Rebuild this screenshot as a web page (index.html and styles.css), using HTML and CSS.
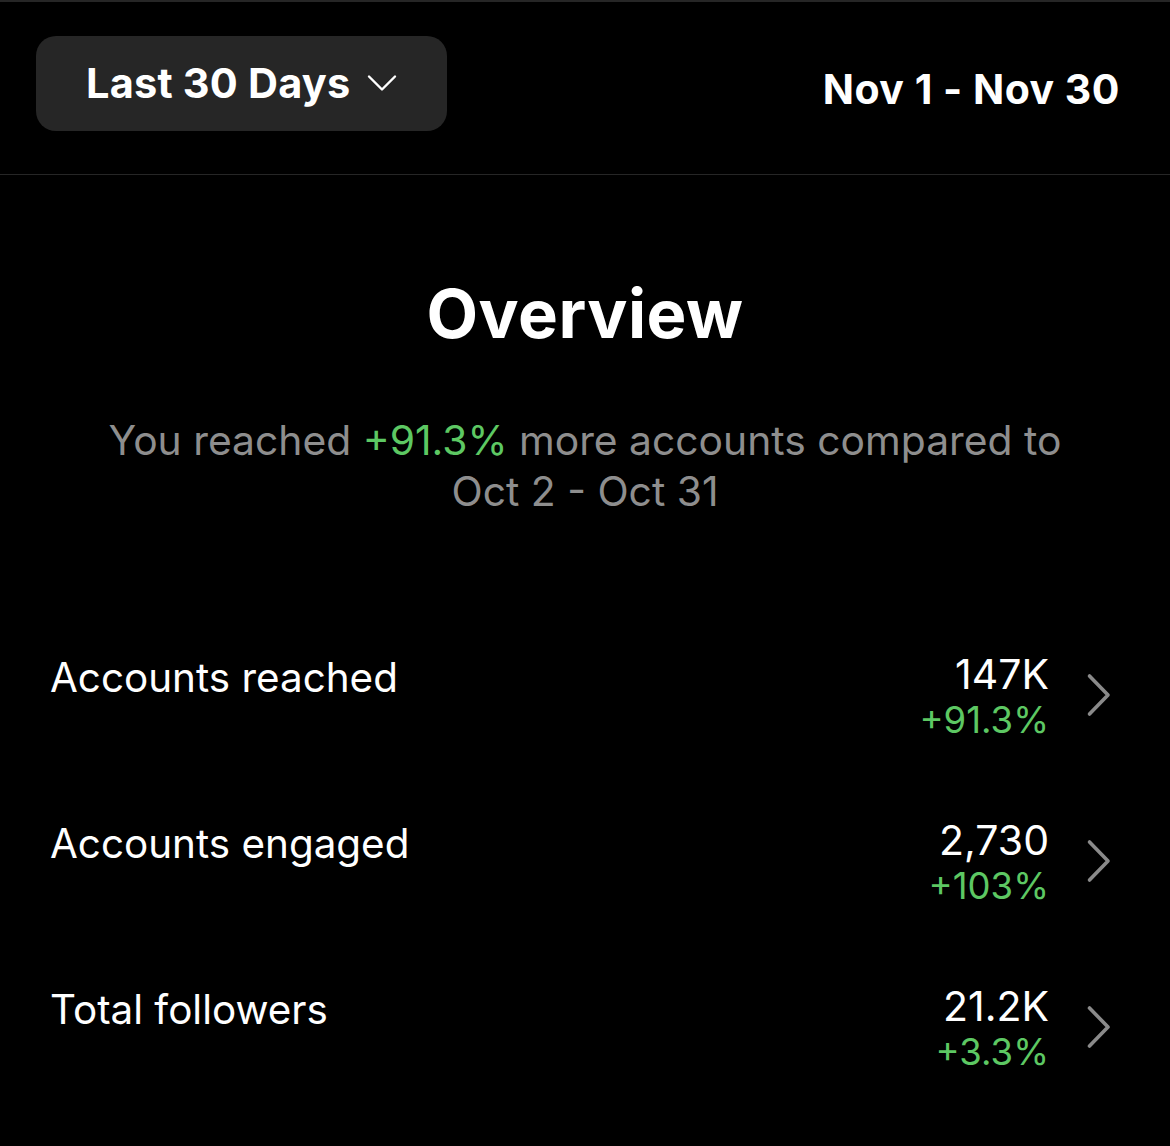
FILE: index.html
```html
<!DOCTYPE html>
<html>
<head>
<meta charset="utf-8">
<link rel="stylesheet" href="styles.css">
</head>
<body>
<div class="page">
  <header class="topbar">
    <button class="range-btn">
      <span>Last 30 Days</span>
      <svg class="caret" width="30" height="19" viewBox="0 0 30 19"><path d="M2 2.5 L15 15.5 L28 2.5" fill="none" stroke="#fff" stroke-width="2.4" stroke-linecap="round" stroke-linejoin="round"/></svg>
    </button>
    <div class="dates">Nov 1 - Nov 30</div>
  </header>
  <section class="overview">
    <h1 class="title">Overview</h1>
    <p class="summary">You reached <span class="green">+91.3%</span> more accounts compared to<br>Oct 2 - Oct 31</p>
  </section>
  <section class="stats">
    <div class="row">
      <div class="label">Accounts reached</div>
      <div class="nums"><div class="val">147K</div><div class="pct">+91.3%</div></div>
      <svg class="chev" width="26" height="44" viewBox="0 0 26 44"><path d="M3.5 3 L22 22 L3.5 41" fill="none" stroke="#8a8a8a" stroke-width="3.6" stroke-linecap="round" stroke-linejoin="round"/></svg>
    </div>
    <div class="row">
      <div class="label">Accounts engaged</div>
      <div class="nums"><div class="val">2,730</div><div class="pct">+103%</div></div>
      <svg class="chev" width="26" height="44" viewBox="0 0 26 44"><path d="M3.5 3 L22 22 L3.5 41" fill="none" stroke="#8a8a8a" stroke-width="3.6" stroke-linecap="round" stroke-linejoin="round"/></svg>
    </div>
    <div class="row">
      <div class="label">Total followers</div>
      <div class="nums"><div class="val">21.2K</div><div class="pct">+3.3%</div></div>
      <svg class="chev" width="26" height="44" viewBox="0 0 26 44"><path d="M3.5 3 L22 22 L3.5 41" fill="none" stroke="#8a8a8a" stroke-width="3.6" stroke-linecap="round" stroke-linejoin="round"/></svg>
    </div>
  </section>
</div>
</body>
</html>
```
FILE: styles.css
```css
html, body {
  margin: 0;
  padding: 0;
  background: #000;
}
body {
  font-family: Inter, "Noto Sans", "Liberation Sans", sans-serif;
  color: #fff;
}
.page {
  width: 1170px;
  height: 1146px;
  border-top: 2px solid #262626;
  box-sizing: border-box;
  overflow: hidden;
}
.topbar {
  display: flex;
  align-items: center;
  justify-content: space-between;
  height: 173px;
  padding: 0 50px 0 36px;
  border-bottom: 1px solid #262626;
  box-sizing: border-box;
}
.range-btn {
  display: flex;
  align-items: center;
  gap: 17px;
  width: 411px;
  height: 95px;
  margin-top: -10px;
  padding: 0 0 0 50px;
  background: #262626;
  border: none;
  border-radius: 20px;
  color: #fff;
  font-family: inherit;
  font-size: 41.5px;
  font-weight: 700;
  letter-spacing: 0.2px;
}
.caret {
  margin-top: 0;
}
.dates {
  font-size: 41px;
  font-weight: 700;
  letter-spacing: 0.5px;
  margin-top: 2px;
}
.overview {
  text-align: center;
  padding-top: 98px;
}
.title {
  margin: 0;
  font-size: 67px;
  font-weight: 700;
  line-height: 82px;
  letter-spacing: 0.5px;
}
.summary {
  margin: 60px 0 0;
  color: #8e8e8e;
  font-size: 40.8px;
  line-height: 51px;
}
.green {
  color: #5dc863;
}
.stats {
  padding: 97px 58px 0 50px;
}
.row {
  display: flex;
  align-items: center;
  height: 166px;
}
.label {
  flex: 1;
  font-size: 40.4px;
  margin-top: -40px;
}
.nums {
  text-align: right;
  font-size: 40px;
  line-height: 46px;
}
.val {
  font-size: 41px;
}
.pct {
  color: #5dc863;
  font-size: 36.5px;
}
.chev {
  margin-left: 37px;
  margin-top: -4px;
}
```
